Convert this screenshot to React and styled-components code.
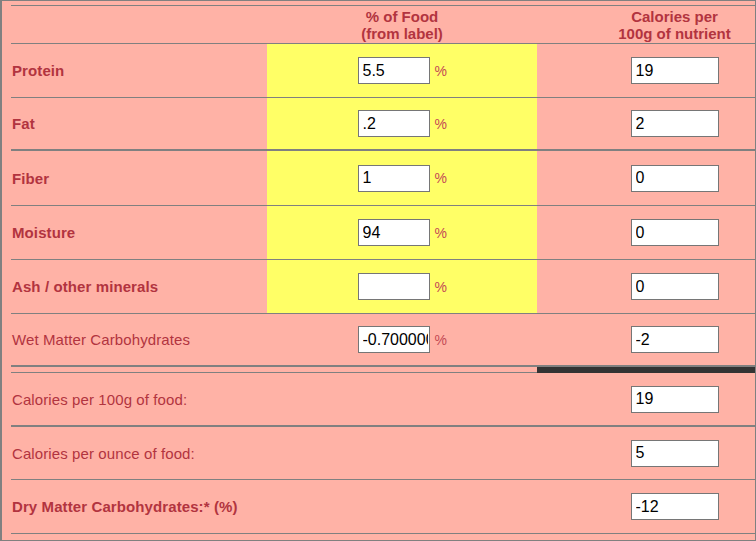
import React from 'react';
import styled, { createGlobalStyle, css } from 'styled-components';

const GlobalStyle = createGlobalStyle`
    html, body {
        margin: 0;
        padding: 0;
        background: #ffffff;
    }
    * {
        box-sizing: border-box;
    }
`

const Frame = styled.div`
    width: 756px;
    height: 541px;
    overflow: hidden;
    background: #ffb2a6;
    border: 1px solid #808080;
    border-left-width: 2px;
    padding: 4px 0 0 9px;
    font-family: "Liberation Sans", Arial, sans-serif;
    color: #b2343f;
`

const Table = styled.div`
    width: 801px;
`

const columns = css`
    display: grid;
    grid-template-columns: 256px 270px 275px;
`

const HeaderRow = styled.div`
    ${columns}
    height: 39px;
    border-top: 1px solid #808080;
    border-bottom: 1px solid #808080;
`

const HeaderCell = styled.div`
    display: flex;
    align-items: center;
    justify-content: center;
    text-align: center;
    padding-top: 1px;
    font-size: 15px;
    font-weight: bold;
    line-height: 17px;
`

const Row = styled.div`
    ${columns}
    height: ${p => p.$height || 54}px;
    border-bottom: ${p => (p.$thick ? 2 : 1)}px solid #808080;
`

const Label = styled.div`
    display: flex;
    align-items: center;
    padding-left: 1px;
    font-size: 15px;
    letter-spacing: 0.1px;
    font-weight: ${p => (p.$bold ? 'bold' : 'normal')};
`

const Cell = styled.div`
    display: flex;
    align-items: center;
    justify-content: center;
    gap: 5px;
    background: ${p => (p.$yellow ? '#ffff66' : 'transparent')};
`

const Field = styled.input`
    width: ${p => p.$width}px;
    height: 27px;
    padding: 1px 1px 1px 4px;
    border: 1px solid #767676;
    border-radius: 0;
    background: #ffffff;
    color: #000000;
    font-family: "Liberation Sans", Arial, sans-serif;
    font-size: 16px;
    outline: none;
`

const Percent = styled.span`
    width: 12px;
    font-size: 14px;
    color: #c44a55;
`

const Divider = styled.div`
    ${columns}
    height: 6px;
`

const DividerGap = styled.div`
    grid-column: span 2;
    border-bottom: 1px solid #808080;
`

const DividerBar = styled.div`
    background: #333333;
`

const nutrients = [
    { name: 'Protein', pct: '5.5', cal: '19' },
    { name: 'Fat', pct: '.2', cal: '2', thick: true, height: 53 },
    { name: 'Fiber', pct: '1', cal: '0', height: 55 },
    { name: 'Moisture', pct: '94', cal: '0' },
    { name: 'Ash / other minerals', pct: '', cal: '0' },
]

const totals = [
    { name: 'Calories per 100g of food:', value: '19', thick: true },
    { name: 'Calories per ounce of food:', value: '5', height: 53 },
    { name: 'Dry Matter Carbohydrates:* (%)', value: '-12', bold: true },
]

const App = () => {
    return (
        <Frame>
            <GlobalStyle />
            <Table>
                <HeaderRow>
                    <HeaderCell />
                    <HeaderCell>% of Food<br />(from label)</HeaderCell>
                    <HeaderCell>Calories per<br />100g of nutrient</HeaderCell>
                </HeaderRow>

                {nutrients.map(n => (
                    <Row key={n.name} $thick={n.thick} $height={n.height}>
                        <Label $bold>{n.name}</Label>
                        <Cell $yellow>
                            <Field $width={72} defaultValue={n.pct} />
                            <Percent>%</Percent>
                        </Cell>
                        <Cell>
                            <Field $width={88} defaultValue={n.cal} />
                        </Cell>
                    </Row>
                ))}

                <Row $thick $height={53}>
                    <Label>Wet Matter Carbohydrates</Label>
                    <Cell>
                        <Field $width={72} defaultValue="-0.7000000000000028" />
                        <Percent>%</Percent>
                    </Cell>
                    <Cell>
                        <Field $width={88} defaultValue="-2" />
                    </Cell>
                </Row>

                <Divider>
                    <DividerGap />
                    <DividerBar />
                </Divider>

                {totals.map(t => (
                    <Row key={t.name} $thick={t.thick} $height={t.height}>
                        <Label $bold={t.bold}>{t.name}</Label>
                        <Cell />
                        <Cell>
                            <Field $width={88} defaultValue={t.value} />
                        </Cell>
                    </Row>
                ))}
            </Table>
        </Frame>
    )
}

export default App;
